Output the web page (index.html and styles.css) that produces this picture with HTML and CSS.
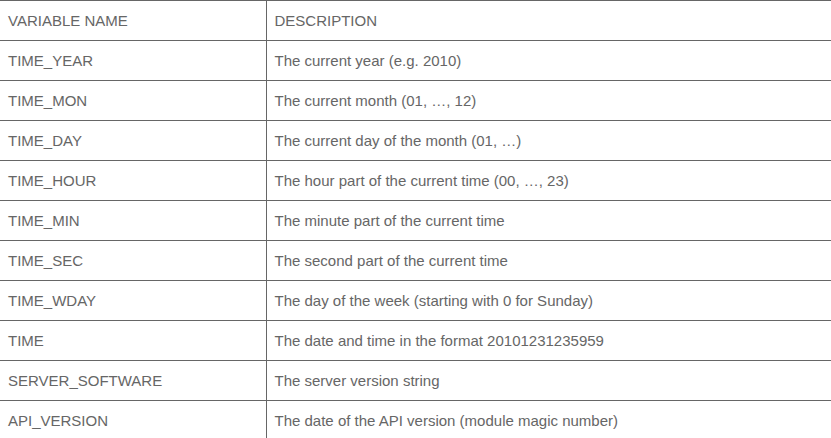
FILE: index.html
```html
<!DOCTYPE html>
<html>
<head>
<meta charset="utf-8">
<link rel="stylesheet" href="styles.css">
</head>
<body>
<table class="vars">
  <tr><td class="name">VARIABLE NAME</td><td class="desc">DESCRIPTION</td></tr>
  <tr><td class="name">TIME_YEAR</td><td class="desc">The current year (e.g. 2010)</td></tr>
  <tr><td class="name">TIME_MON</td><td class="desc">The current month (01, …, 12)</td></tr>
  <tr><td class="name">TIME_DAY</td><td class="desc">The current day of the month (01, …)</td></tr>
  <tr><td class="name">TIME_HOUR</td><td class="desc">The hour part of the current time (00, …, 23)</td></tr>
  <tr><td class="name">TIME_MIN</td><td class="desc">The minute part of the current time</td></tr>
  <tr><td class="name">TIME_SEC</td><td class="desc">The second part of the current time</td></tr>
  <tr><td class="name">TIME_WDAY</td><td class="desc">The day of the week (starting with 0 for Sunday)</td></tr>
  <tr><td class="name">TIME</td><td class="desc">The date and time in the format 20101231235959</td></tr>
  <tr><td class="name">SERVER_SOFTWARE</td><td class="desc">The server version string</td></tr>
  <tr><td class="name">API_VERSION</td><td class="desc">The date of the API version (module magic number)</td></tr>
</table>
</body>
</html>
```
FILE: styles.css
```css
html, body {
  margin: 0;
  padding: 0;
  background: #fff;
}
.vars {
  width: 831px;
  border-collapse: collapse;
  table-layout: fixed;
  font-family: "Liberation Sans", Arial, Helvetica, sans-serif;
  font-size: 15px;
  color: #666;
}
.vars td {
  height: 40px;
  box-sizing: border-box;
  padding: 0 8px 1px 8px;
  border-top: 1px solid #666;
  vertical-align: middle;
  line-height: 17px;
  white-space: nowrap;
}
.vars .name {
  width: 266px;
  border-right: 1px solid #666;
}
.vars .desc {
  padding-left: 8px;
}
```
